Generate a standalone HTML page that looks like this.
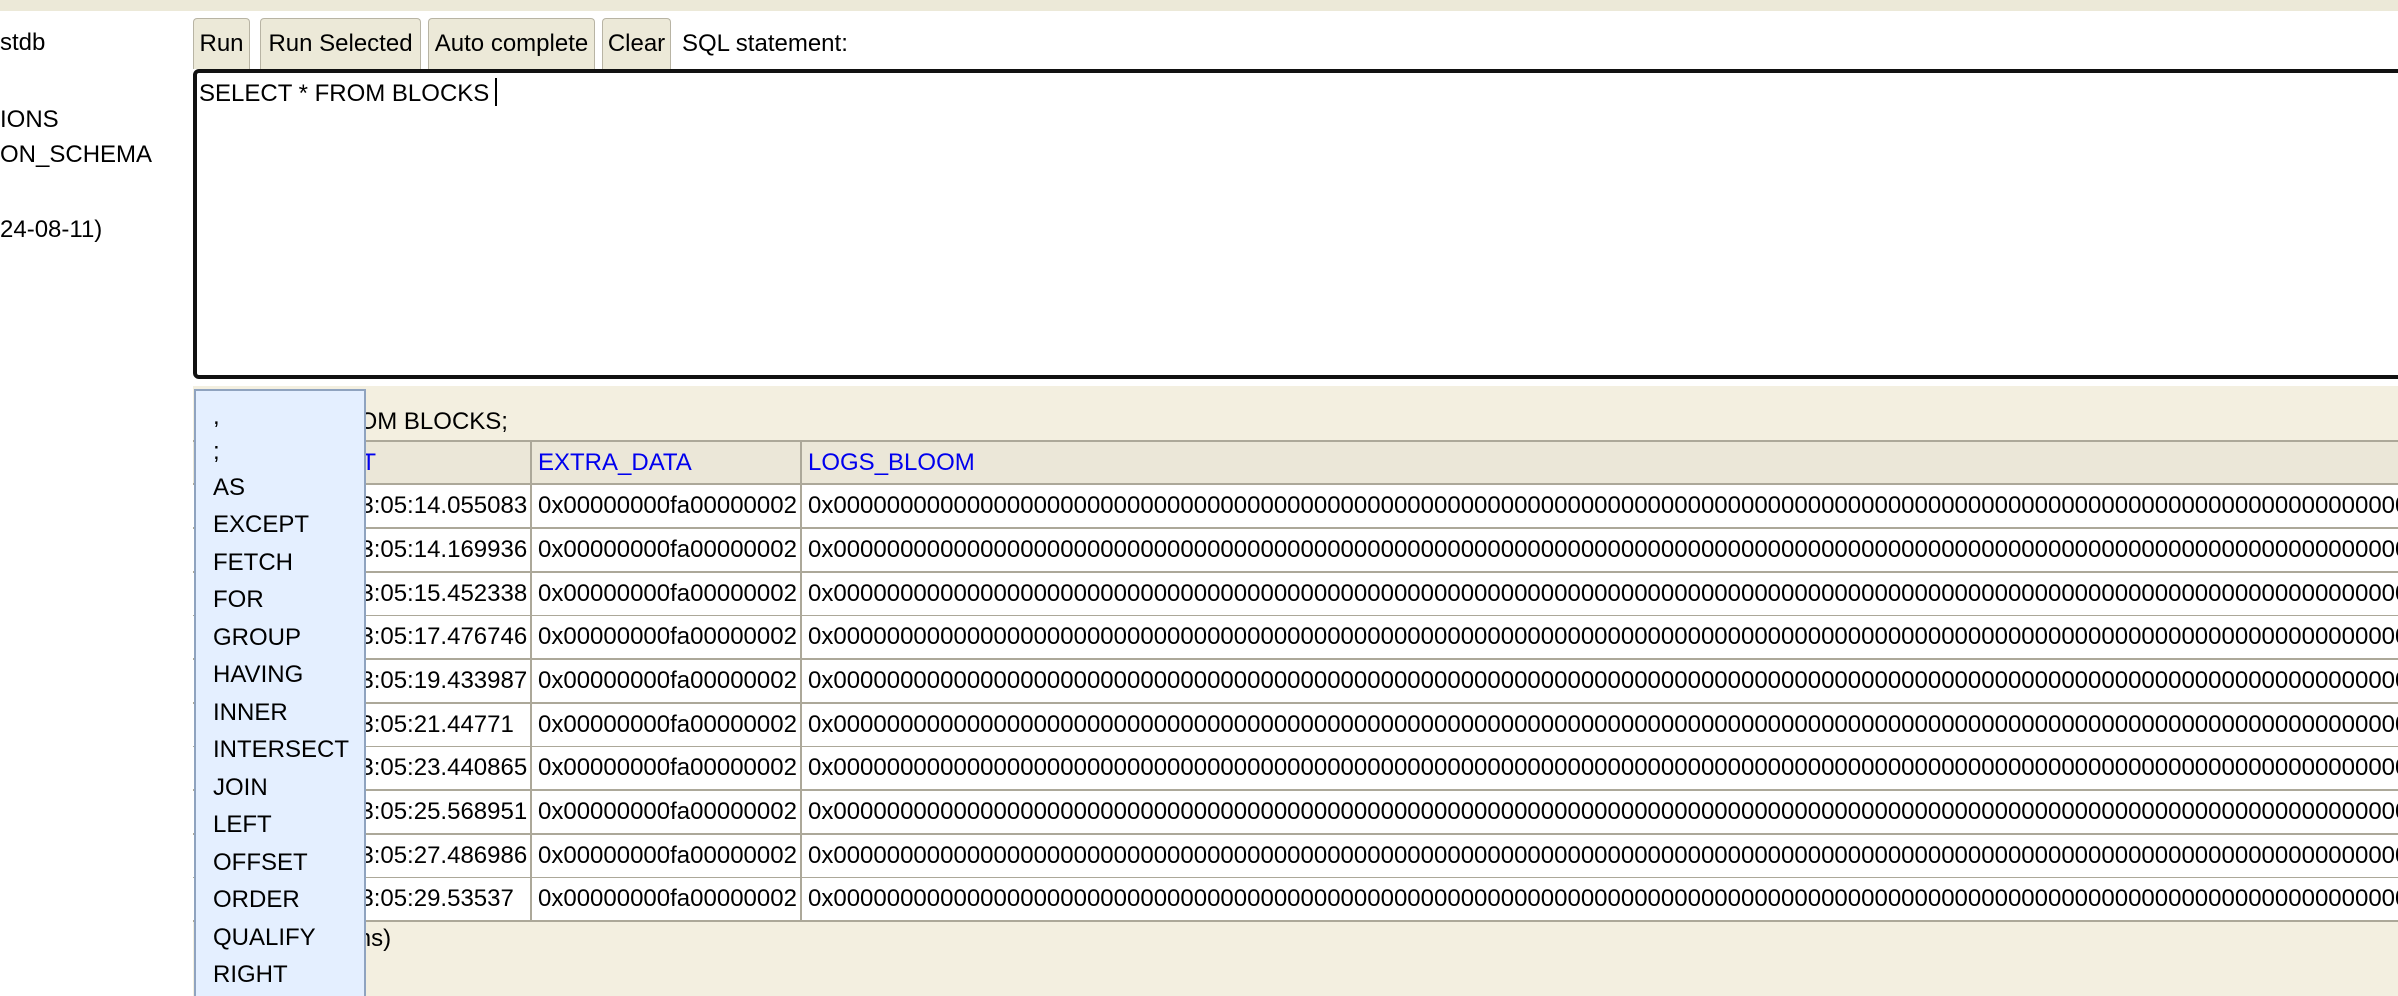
<!DOCTYPE html>
<html><head><meta charset="utf-8"><style>
*{margin:0;padding:0;box-sizing:border-box}
html{width:2398px;height:996px;overflow:hidden}
body{width:2398px;height:996px;overflow:hidden;background:#fff;font-family:"Liberation Sans",Arial,sans-serif;font-size:24px;color:#000;position:relative}
.a{position:absolute;white-space:nowrap}
.btn{position:absolute;top:18px;height:51px;background:#ece9d8;border:1px solid #b8b4a4;border-bottom:none;border-radius:4px 4px 0 0;line-height:50px;text-align:center}
.row{position:absolute;left:193px;width:2205px;height:44px;border-bottom:2px solid #aca899;background:#fff;overflow:hidden}
.c{position:absolute;top:0;height:100%;line-height:42px;white-space:nowrap;overflow:hidden}
.c1{left:0;width:339px;border-right:2px solid #aca899;padding-left:154px}
.c2{left:341px;width:268px;border-right:2px solid #aca899;padding-left:4px}
.c3{left:611px;width:1700px;padding-left:4px}
.dd{position:absolute;left:194px;top:389px;width:172px;height:607px;background:#e4efff;border:2px solid #8fa3bf;border-bottom:none;overflow:hidden}
.dd div{position:absolute;left:17px;white-space:nowrap}
</style></head><body>
<div class="a" style="left:0;top:0;width:2398px;height:11px;background:#ece9d8"></div>
<div class="a" style="left:0;top:29px">stdb</div>
<div class="a" style="left:0;top:106px">IONS</div>
<div class="a" style="left:0;top:141px">ON_SCHEMA</div>
<div class="a" style="left:0;top:216px">24-08-11)</div>
<div class="btn" style="left:193px;width:57px">Run</div>
<div class="btn" style="left:260px;width:161px">Run Selected</div>
<div class="btn" style="left:428px;width:167px">Auto complete</div>
<div class="btn" style="left:602px;width:69px">Clear</div>
<div class="a" style="left:682px;top:30px">SQL statement:</div>
<div class="a" style="left:193px;top:69px;width:2260px;height:310px;border:4px solid #111;border-radius:6px;background:#fff"></div>
<div class="a" style="left:199px;top:78px">SELECT * FROM BLOCKS<span style="display:inline-block;width:2px;height:28px;background:#000;vertical-align:-5px;margin-left:6px"></span></div>
<div class="a" style="left:193px;top:386px;width:2205px;height:610px;background:#f3efe0"></div>
<div class="a" style="left:211px;top:408px">SELECT * FROM BLOCKS;</div>
<div class="row" style="top:440px;height:45px;border-top:2px solid #aca899;background:#ebe7d8;color:#0000ee">
<div class="c c1" style="padding-left:0;padding-right:154px;text-align:right">CREATED_AT</div><div class="c c2">EXTRA_DATA</div><div class="c c3">LOGS_BLOOM</div></div>
<div class="row" style="top:485px"><div class="c c1">13:05:14.055083</div><div class="c c2">0x00000000fa00000002</div><div class="c c3">0x000000000000000000000000000000000000000000000000000000000000000000000000000000000000000000000000000000000000000000000000000000</div></div>
<div class="row" style="top:529px"><div class="c c1">13:05:14.169936</div><div class="c c2">0x00000000fa00000002</div><div class="c c3">0x000000000000000000000000000000000000000000000000000000000000000000000000000000000000000000000000000000000000000000000000000000</div></div>
<div class="row" style="top:573px"><div class="c c1">13:05:15.452338</div><div class="c c2">0x00000000fa00000002</div><div class="c c3">0x000000000000000000000000000000000000000000000000000000000000000000000000000000000000000000000000000000000000000000000000000000</div></div>
<div class="row" style="top:616px"><div class="c c1">13:05:17.476746</div><div class="c c2">0x00000000fa00000002</div><div class="c c3">0x000000000000000000000000000000000000000000000000000000000000000000000000000000000000000000000000000000000000000000000000000000</div></div>
<div class="row" style="top:660px"><div class="c c1">13:05:19.433987</div><div class="c c2">0x00000000fa00000002</div><div class="c c3">0x000000000000000000000000000000000000000000000000000000000000000000000000000000000000000000000000000000000000000000000000000000</div></div>
<div class="row" style="top:704px"><div class="c c1">13:05:21.44771</div><div class="c c2">0x00000000fa00000002</div><div class="c c3">0x000000000000000000000000000000000000000000000000000000000000000000000000000000000000000000000000000000000000000000000000000000</div></div>
<div class="row" style="top:747px"><div class="c c1">13:05:23.440865</div><div class="c c2">0x00000000fa00000002</div><div class="c c3">0x000000000000000000000000000000000000000000000000000000000000000000000000000000000000000000000000000000000000000000000000000000</div></div>
<div class="row" style="top:791px"><div class="c c1">13:05:25.568951</div><div class="c c2">0x00000000fa00000002</div><div class="c c3">0x000000000000000000000000000000000000000000000000000000000000000000000000000000000000000000000000000000000000000000000000000000</div></div>
<div class="row" style="top:835px"><div class="c c1">13:05:27.486986</div><div class="c c2">0x00000000fa00000002</div><div class="c c3">0x000000000000000000000000000000000000000000000000000000000000000000000000000000000000000000000000000000000000000000000000000000</div></div>
<div class="row" style="top:878px"><div class="c c1">13:05:29.53537</div><div class="c c2">0x00000000fa00000002</div><div class="c c3">0x000000000000000000000000000000000000000000000000000000000000000000000000000000000000000000000000000000000000000000000000000000</div></div>
<div class="a" style="left:199px;top:925px">(10 rows, 156 ms)</div>
<div class="dd">
<div style="top:12px">,</div>
<div style="top:47px">;</div>
<div style="top:83px">AS</div>
<div style="top:120px">EXCEPT</div>
<div style="top:158px">FETCH</div>
<div style="top:195px">FOR</div>
<div style="top:233px">GROUP</div>
<div style="top:270px">HAVING</div>
<div style="top:308px">INNER</div>
<div style="top:345px">INTERSECT</div>
<div style="top:383px">JOIN</div>
<div style="top:420px">LEFT</div>
<div style="top:458px">OFFSET</div>
<div style="top:495px">ORDER</div>
<div style="top:533px">QUALIFY</div>
<div style="top:570px">RIGHT</div>
</div>
</body></html>
